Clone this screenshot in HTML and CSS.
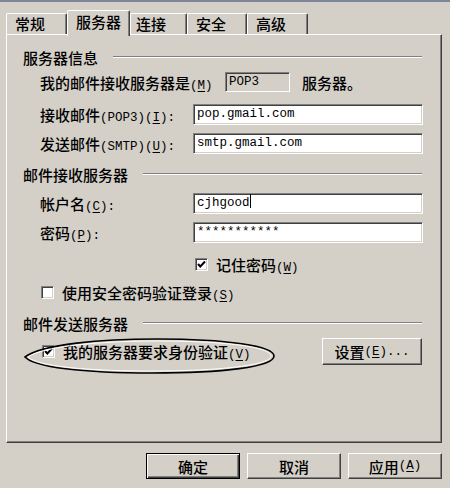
FILE: index.html
```html
<!DOCTYPE html>
<html lang="zh-CN">
<head>
<meta charset="utf-8">
<title>服务器</title>
<link rel="stylesheet" href="styles.css">
</head>
<body>
<div class="topline"></div>
<div class="tabs">
  <div class="tab t1">常规</div>
  <div class="tab active t2">服务器</div>
  <div class="tab t3">连接</div>
  <div class="tab t4">安全</div>
  <div class="tab t5">高级</div>
</div>
<div class="panel">
  <div class="group"><span>服务器信息</span><i class="etch"></i></div>
  <div class="row r-m">
    <span class="lbl-wide">我的邮件接收服务器是<span class="en">(<u>M</u>)</span></span>
    <div class="field ro">POP3</div>
    <span class="after">服务器。</span>
  </div>
  <div class="row r-pop">
    <span class="lbl">接收邮件<span class="en">(POP3)(<u>I</u>):</span></span>
    <div class="field">pop.gmail.com</div>
  </div>
  <div class="row r-smtp">
    <span class="lbl">发送邮件<span class="en">(SMTP)(<u>U</u>):</span></span>
    <div class="field">smtp.gmail.com</div>
  </div>
  <div class="group g2"><span>邮件接收服务器</span><i class="etch"></i></div>
  <div class="row r-user">
    <span class="lbl">帐户名<span class="en">(<u>C</u>):</span></span>
    <div class="field">cjhgood<span class="caret"></span></div>
  </div>
  <div class="row r-pass">
    <span class="lbl">密码<span class="en">(<u>P</u>):</span></span>
    <div class="field">***********</div>
  </div>
  <div class="row r-rem">
    <span class="cb"><svg width="11" height="11" viewBox="0 0 11 11"><polyline points="2,5 4.3,7.5 9,2.5" fill="none" stroke="#000" stroke-width="2"/></svg></span>
    <span>记住密码<span class="en">(<u>W</u>)</span></span>
  </div>
  <div class="row r-spa">
    <span class="cb"></span>
    <span>使用安全密码验证登录<span class="en">(<u>S</u>)</span></span>
  </div>
  <div class="group g3"><span>邮件发送服务器</span><i class="etch"></i></div>
  <div class="row r-auth">
    <span class="cb"><svg width="11" height="11" viewBox="0 0 11 11"><polyline points="2,5 4.3,7.5 9,2.5" fill="none" stroke="#000" stroke-width="2"/></svg></span>
    <span>我的服务器要求身份验证<span class="en">(<u>V</u>)</span></span>
    <div class="btn set">设置<span class="en">(<u>E</u>)...</span></div>
  </div>
  <svg class="ellipse" width="256" height="40" viewBox="0 0 256 40">
    <path d="M3,21 C20,8 80,3 135,3 C205,3 252,10 252,20 C252,31 200,37 130,37 C60,37 12,31 3,21 Z" fill="none" stroke="#000" stroke-width="1.6"/>
    <path d="M6,21 C22,10 80,5 135,5 C203,5 249,11 249,20 C249,29 199,35 130,35 C62,35 15,30 6,21 Z" fill="none" stroke="#fff" stroke-width="1"/>
  </svg>
</div>
<div class="btns">
  <div class="btn default">确定</div>
  <div class="btn">取消</div>
  <div class="btn">应用<span class="en">(<u>A</u>)</span></div>
</div>
</body>
</html>
```
FILE: styles.css
```css
html, body {
  margin: 0;
  padding: 0;
}
body {
  width: 450px;
  height: 488px;
  overflow: hidden;
  background: #d4d0c8;
  font-family: "Noto Sans CJK SC", sans-serif;
  font-size: 15px;
  font-weight: 500;
  color: #000;
}
.en {
  font-family: "Liberation Mono", "Noto Sans CJK SC", monospace;
  font-size: 12.5px;
  font-weight: 400;
}
u {
  text-underline-offset: 2px;
}
.topline {
  height: 2px;
  background: #7d8699;
}
.tabs {
  display: flex;
  align-items: flex-end;
  height: 24px;
  margin-top: 8px;
  padding-left: 6px;
}
.tab {
  box-sizing: border-box;
  height: 21px;
  line-height: 19px;
  padding-left: 8px;
  border-top: 1px solid #fff;
  border-left: 1px solid #fff;
  border-right: 1px solid #404040;
  box-shadow: inset -1px 0 #808080;
  border-radius: 2px 2px 0 0;
  background: #d4d0c8;
}
.tab.active {
  position: relative;
  z-index: 1;
  height: 26px;
  margin-bottom: -2px;
  line-height: 21px;
}
.t1 { width: 61px; }
.t2 { width: 63px; }
.t3 { width: 57px; padding-left: 5px; }
.t4 { width: 60px; }
.t5 { width: 61px; }
.panel {
  position: relative;
  box-sizing: border-box;
  width: 436px;
  height: 409px;
  margin-left: 6px;
  padding: 12px 18px 0 16px;
  border: 1px solid;
  border-color: #fff #404040 #404040 #fff;
  box-shadow: inset -1px -1px #808080;
}
.group {
  display: flex;
  align-items: center;
  gap: 15px;
  height: 20px;
}
.etch {
  flex: 1;
  height: 0;
  margin-right: 1px;
  border-top: 1px solid #808080;
  border-bottom: 1px solid #fff;
}
.row {
  display: flex;
  align-items: center;
  padding-left: 17px;
  height: 21px;
}
.lbl {
  width: 153px;
  flex: none;
}
.lbl-wide {
  width: 185px;
  flex: none;
}
.field {
  box-sizing: border-box;
  width: 230px;
  height: 21px;
  padding-left: 3px;
  background: #fff;
  border: 1px solid;
  border-color: #808080 #fff #fff #808080;
  box-shadow: inset 1px 1px #404040, inset -1px -1px #d4d0c8;
  font-family: "Liberation Mono", monospace;
  font-size: 12.5px;
  font-weight: 400;
  line-height: 19px;
  white-space: nowrap;
}
.field.ro {
  width: 65px;
  height: 20px;
  line-height: 18px;
  background: #d4d0c8;
}
.caret {
  display: inline-block;
  width: 1px;
  height: 14px;
  background: #000;
  vertical-align: -2px;
}
.after {
  margin-left: 12px;
}
.r-m { margin-top: 5px; height: 20px; }
.r-pop { margin-top: 12px; }
.r-smtp { margin-top: 8px; }
.g2 { margin-top: 10px; }
.r-user { margin-top: 9px; }
.r-pass { margin-top: 8px; }
.r-rem { margin-top: 13px; height: 16px; padding-left: 172px; }
.r-spa { margin-top: 12px; height: 16px; padding-left: 18px; }
.g3 { margin-top: 13px; }
.r-auth { margin-top: 5px; height: 27px; padding-left: 19px; }
.cb {
  box-sizing: border-box;
  flex: none;
  width: 13px;
  height: 13px;
  margin-right: 8px;
  padding: 0;
  background: #fff;
  border: 1px solid;
  border-color: #808080 #fff #fff #808080;
  box-shadow: inset 1px 1px #404040, inset -1px -1px #d4d0c8;
  display: flex;
}
.cb svg {
  display: block;
}
.btn {
  box-sizing: border-box;
  width: 94px;
  height: 26px;
  display: flex;
  align-items: center;
  justify-content: center;
  border: 1px solid;
  border-color: #fff #404040 #404040 #fff;
  box-shadow: inset -1px -1px #808080;
  background: #d4d0c8;
}
.btn.default {
  border-color: #000;
  box-shadow: inset 1px 1px #fff, inset -1px -1px #404040, inset -2px -2px #808080;
}
.btn.set {
  width: 100px;
  height: 27px;
  margin-left: auto;
  margin-right: 1px;
}
.ellipse {
  position: absolute;
  left: 15px;
  top: 301px;
}
.btns {
  display: flex;
  justify-content: flex-end;
  gap: 7px;
  margin-top: 10px;
  padding-right: 8px;
}
```
